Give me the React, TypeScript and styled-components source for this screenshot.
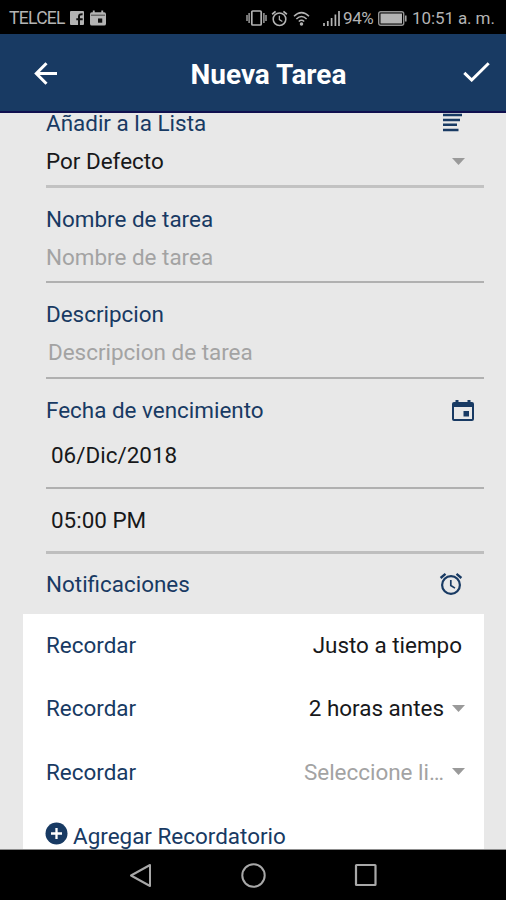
import React from 'react';
import styled, { createGlobalStyle } from 'styled-components';

const navy = '#183a63';
const ink = '#17181a';
const muted = '#a3a3a3';

const GlobalStyle = createGlobalStyle`
  *, *::before, *::after { box-sizing: border-box; }
  body { margin: 0; background: #e8e8e8; font-family: Roboto, "Liberation Sans", sans-serif; }
`;

const Screen = styled.div`
  display: flex;
  flex-direction: column;
  width: 506px;
  height: 900px;
  overflow: hidden;
  background: #e8e8e8;
`;

const StatusBar = styled.header`
  display: flex;
  align-items: center;
  flex: 0 0 34px;
  padding: 2px 10px 0 9px;
  background: #000;
  color: #b4b4b4;
  font-size: 17.5px;
  line-height: 20px;
  white-space: nowrap;
`;

const Carrier = styled.span`
  width: 61px;
  letter-spacing: -0.7px;
`;

const StatusGlyph = styled.svg<{ $gap?: number }>`
  display: block;
  flex: none;
  margin-left: ${p => p.$gap ?? 0}px;
`;

const StatusRight = styled.div`
  display: flex;
  align-items: center;
  margin-left: auto;
`;

const Percent = styled.span`
  width: 33px;
  font-size: 17px;
  letter-spacing: -0.4px;
`;

const Clock = styled.span`
  width: 84px;
  margin-left: 5px;
  font-size: 17px;
  letter-spacing: -0.1px;
`;

const AppBar = styled.div`
  display: grid;
  grid-template-columns: 90px 1fr 90px;
  align-items: center;
  flex: 0 0 79px;
  background: ${navy};
  border-bottom: 2px solid #10104f;
  padding-top: 2px;
`;

const Title = styled.h1`
  margin: 0;
  padding: 2px 0 0 31px;
  text-align: center;
  color: #fff;
  font-size: 28px;
  font-weight: 700;
  line-height: 32px;
`;

const BarButton = styled.button<{ $side: 'left' | 'right' }>`
  display: flex;
  justify-content: ${p => (p.$side === 'left' ? 'flex-start' : 'flex-end')};
  padding: ${p => (p.$side === 'left' ? '0 0 0 34px' : '0 16px 4px 0')};
  border: 0;
  background: none;
`;

const Form = styled.main`
  flex: 1;
  overflow: hidden;
  padding: 0 22px 0 23px;
  border-bottom: 1px solid #8d8d8d;
`;

const Field = styled.section<{ $height: number; $line?: string; $thick?: number }>`
  display: flow-root;
  height: ${p => p.$height}px;
  margin-left: 23px;
  border-bottom: ${p => p.$thick ?? 2}px solid ${p => p.$line ?? '#b0b0b0'};
`;

const Row = styled.div<{ $height: number; $top?: number; $indent?: number; $right?: number }>`
  display: flex;
  align-items: center;
  justify-content: space-between;
  height: ${p => p.$height}px;
  margin-top: ${p => p.$top ?? 0}px;
  padding: 0 ${p => p.$right ?? 0}px 0 ${p => p.$indent ?? 0}px;
`;

const Text = styled.span<{ $tone?: 'label' | 'value' | 'muted' }>`
  color: ${p => (p.$tone === 'value' ? ink : p.$tone === 'muted' ? muted : navy)};
  font-size: 22.45px;
  line-height: 26px;
  white-space: nowrap;
`;

const Card = styled.section`
  height: 240px;
  padding-top: 16px;
  background: #fff;
`;

const ReminderRow = styled(Row)`
  margin-bottom: 33.3px;
  padding-left: 23px;
`;

const Choice = styled.div`
  display: flex;
  align-items: center;
  gap: 8px;
`;

const AddReminder = styled.button`
  display: flex;
  align-items: center;
  gap: 5px;
  height: 32px;
  padding: 0 0 0 22px;
  border: 0;
  background: none;
  font-family: inherit;
`;

const PlusIcon = styled.svg`
  margin-top: -4px;
`;

const Icon = styled.svg`
  display: block;
  flex: none;
`;

const NavBar = styled.nav`
  display: flex;
  flex: 0 0 50px;
  justify-content: center;
  align-items: center;
  gap: 88px;
  background: #000;
`;

const Caret = () => (
  <Icon width="13" height="7" viewBox="0 0 13 7"><path d="M0 0h13L6.5 7z" fill="#9a9a9a" /></Icon>
);

const AlarmPaths = () => (
  <>
    <circle cx="12" cy="13" r="8.9" fill="none" stroke="currentColor" strokeWidth="2.2" />
    <path d="M1.6 6 6.5 1.9M22.4 6 17.5 1.9" fill="none" stroke="currentColor" strokeWidth="2.4" />
    <path d="M11.8 8v5.5l4.2 2.6" fill="none" stroke="currentColor" strokeWidth="1.7" />
  </>
);

const AlarmIcon = styled(Icon)`
  color: ${navy};
`;

export default function App() {
  return (
    <>
      <GlobalStyle />
      <Screen>
        <StatusBar>
          <Carrier>TELCEL</Carrier>
          <StatusGlyph width="14" height="14" viewBox="0 0 14 14">
            <rect width="14" height="14" rx="1" fill="#b4b4b4" />
            <path d="M9 14V8.2H6.3M9 8.2h3.7M9 8.2V5.2Q9 3 12.6 3.2" fill="none" stroke="#111" strokeWidth="2" />
          </StatusGlyph>
          <StatusGlyph $gap={6} width="16" height="16" viewBox="0 0 17 16">
            <path d="M3 0h2v2h7V0h2v2h1q2 0 2 2v10q0 2-2 2H2q-2 0-2-2V4q0-2 2-2h1z" fill="#b4b4b4" />
            <path d="M1 5h15" stroke="#222" strokeWidth=".8" />
            <rect x="8.5" y="8.5" width="4.5" height="4.5" fill="#111" />
          </StatusGlyph>
          <StatusRight>
            <StatusGlyph width="21" height="16" viewBox="0 0 21 16">
              <rect x="5.8" y="1" width="9.4" height="14" rx="1" fill="none" stroke="#b4b4b4" strokeWidth="1.7" />
              <path d="M3.1 3v10M17.9 3v10M1 5v6M20 5v6" stroke="#b4b4b4" strokeWidth="1.3" />
            </StatusGlyph>
            <StatusGlyph $gap={4} width="17" height="17" viewBox="0 0 24 24" color="#b4b4b4"><AlarmPaths /></StatusGlyph>
            <StatusGlyph $gap={5} width="17" height="15" viewBox="0 0 17 15" fill="none" stroke="#b4b4b4" strokeWidth="1.5">
              <path d="M1 5.3Q8.5-2 16 5.3M3.4 8Q8.5 3 13.6 8M5.8 10.5Q8.5 8 11.2 10.5" />
              <circle cx="8.5" cy="13" r="1" fill="#b4b4b4" />
            </StatusGlyph>
            <StatusGlyph $gap={13} width="17" height="16" viewBox="0 0 17 16">
              <path d="M1 13v3M4.8 11v5M8.6 8v8M12.4 4.5V16M16 1v15" stroke="#b4b4b4" strokeWidth="1.7" />
            </StatusGlyph>
            <StatusGlyph width="3" height="1" />
            <Percent>94%</Percent>
            <StatusGlyph $gap={2} width="29" height="15" viewBox="0 0 29 15">
              <rect x=".7" y=".7" width="25" height="13.6" rx="2" fill="none" stroke="#929292" strokeWidth="1.4" />
              <rect x="2.5" y="2.5" width="21.5" height="10" fill="#b4b4b4" />
              <path d="M27.8 4.5v6" stroke="#aaa" strokeWidth="1.5" />
            </StatusGlyph>
            <Clock>10:51 a. m.</Clock>
          </StatusRight>
        </StatusBar>

        <AppBar>
          <BarButton $side="left" aria-label="Atrás">
            <Icon width="24" height="23" viewBox="0 0 24 23" fill="none" stroke="#fff" strokeWidth="3">
              <path d="M12.5 1.2 2.3 11.5l10.2 10.3M2.3 11.5H23" />
            </Icon>
          </BarButton>
          <Title>Nueva Tarea</Title>
          <BarButton $side="right" aria-label="Guardar">
            <Icon width="27" height="20" viewBox="0 0 27 20" fill="none" stroke="#fff" strokeWidth="3">
              <path d="M1.3 10.8 8.7 18 25.7 1.3" />
            </Icon>
          </BarButton>
        </AppBar>

        <Form>
          <Field $height={75} $line="#c2c2c2" $thick={3}>
            <Row $height={20} $right={22}>
              <Text>Añadir a la Lista</Text>
              <Icon width="19" height="20" viewBox="0 0 19 20">
                <path d="M0 2h19M0 7h17M0 11.8h14M0 17h15.5" stroke={navy} strokeWidth="2.4" />
              </Icon>
            </Row>
            <Row $height={30} $top={13} $right={19}><Text $tone="value">Por Defecto</Text><Caret /></Row>
          </Field>

          <Field $height={95}>
            <Row $height={30} $top={16}><Text>Nombre de tarea</Text></Row>
            <Row $height={30} $top={8}><Text $tone="muted">Nombre de tarea</Text></Row>
          </Field>

          <Field $height={96}>
            <Row $height={30} $top={16}><Text>Descripcion</Text></Row>
            <Row $height={30} $top={8} $indent={2}><Text $tone="muted">Descripcion de tarea</Text></Row>
          </Field>

          <Field $height={110}>
            <Row $height={30} $top={16} $right={10}>
              <Text>Fecha de vencimiento</Text>
              <Icon width="22" height="21" viewBox="0 0 22 21">
                <path d="M3.5 0h3v2h9V0h3v2H20q2 0 2 2v15q0 2-2 2H2q-2 0-2-2V4q0-2 2-2h1.5zM2 7v12h18V7z" fill={navy} fillRule="evenodd" />
                <rect x="11.5" y="11" width="5.5" height="5.5" fill={navy} />
              </Icon>
            </Row>
            <Row $height={30} $top={15} $indent={5}><Text $tone="value">06/Dic/2018</Text></Row>
          </Field>

          <Field $height={65} $line="#bebebe" $thick={3}>
            <Row $height={62} $indent={5}><Text $tone="value">05:00 PM</Text></Row>
          </Field>

          <Row $height={60} $indent={23} $right={21}>
            <Text>Notificaciones</Text>
            <AlarmIcon width="24" height="24" viewBox="0 0 24 24"><AlarmPaths /></AlarmIcon>
          </Row>

          <Card>
            <ReminderRow $height={30} $right={22}><Text>Recordar</Text><Text $tone="value">Justo a tiempo</Text></ReminderRow>
            <ReminderRow $height={30} $right={19}>
              <Text>Recordar</Text><Choice><Text $tone="value">2 horas antes</Text><Caret /></Choice>
            </ReminderRow>
            <ReminderRow $height={30} $right={19}>
              <Text>Recordar</Text><Choice><Text $tone="muted">Seleccione li…</Text><Caret /></Choice>
            </ReminderRow>
            <AddReminder>
              <PlusIcon width="23" height="23" viewBox="0 0 23 23">
                <circle cx="11.5" cy="11.5" r="11" fill={navy} />
                <path d="M11.5 6v11M6 11.5h11" stroke="#fff" strokeWidth="2.3" />
              </PlusIcon>
              <Text>Agregar Recordatorio</Text>
            </AddReminder>
          </Card>
        </Form>

        <NavBar>
          <Icon width="24" height="25" viewBox="0 0 24 25" fill="none" stroke="#a8a8a8" strokeWidth="2">
            <path d="M2 12.5 21 2v21z" strokeLinejoin="round" />
          </Icon>
          <Icon width="25" height="25" viewBox="0 0 25 25" fill="none" stroke="#a8a8a8" strokeWidth="2">
            <circle cx="12.5" cy="12.5" r="11.2" />
          </Icon>
          <Icon width="24" height="24" viewBox="0 0 24 24" fill="none" stroke="#a8a8a8" strokeWidth="2.2">
            <rect x="2" y="2" width="19.5" height="20" rx=".5" />
          </Icon>
        </NavBar>
      </Screen>
    </>
  );
}
